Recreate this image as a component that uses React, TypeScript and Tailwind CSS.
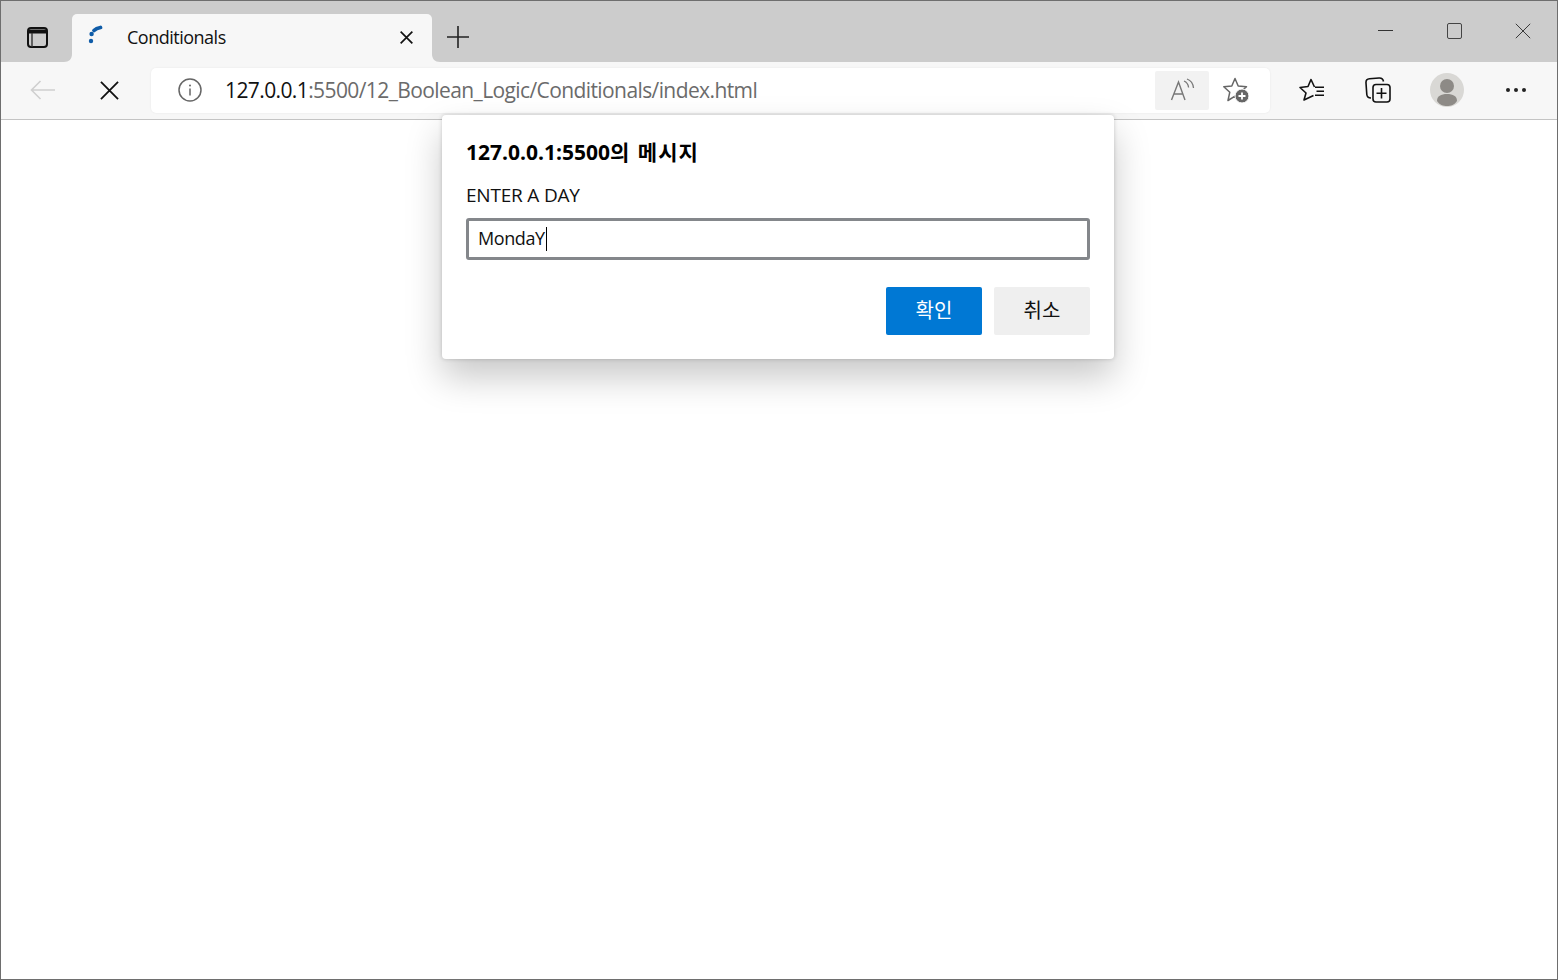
import React from "react";

const FONT = "font-['Noto_Sans','Noto_Sans_CJK_KR',sans-serif]";

function TabFlare({ side }: { side: "l" | "r" }) {
  return (
    <svg width="8" height="8" viewBox="0 0 8 8" className={side === "l" ? "absolute -left-2 bottom-0" : "absolute -right-2 bottom-0"}>
      <path d={side === "l" ? "M8 0V8H0C5 8 8 5 8 0Z" : "M0 0V8H8C3 8 0 5 0 0Z"} fill="#f7f7f7" />
    </svg>
  );
}

function XIcon({ size, sw = 1.6, color = "#111" }: { size: number; sw?: number; color?: string }) {
  return (
    <svg width={size} height={size} viewBox="0 0 20 20" fill="none" stroke={color} strokeWidth={sw}>
      <path d="M1 1L19 19M19 1L1 19" />
    </svg>
  );
}

function TitleBar() {
  return (
    <div className="flex h-[61px] bg-[#cccccc]">
      <div className="flex w-[71px] shrink-0 items-center pl-[26px] pt-[12px]">
        <svg width="21" height="21" viewBox="0 0 21 21" fill="none" stroke="#111" strokeWidth="2">
          <rect x="1" y="1" width="19" height="19" rx="3" />
          <path d="M1 4.5H20" strokeWidth="4" />
          <path d="M5 6V20" strokeWidth="1.4" stroke="#333" />
        </svg>
      </div>
      <div className="relative mt-[13px] flex h-[48px] w-[360px] shrink-0 items-center rounded-t-[5px] bg-[#f7f7f7] pl-[16px] pr-[19px]">
        <TabFlare side="l" />
        <TabFlare side="r" />
        <svg width="16" height="20" viewBox="0 0 16 20" className="shrink-0 -translate-y-[3px]">
          <circle cx="3" cy="16" r="2.2" fill="#0f5ca8" />
          <circle cx="3.6" cy="9" r="2.2" fill="#0f5ca8" />
          <path d="M6 5.5C7.5 4 10 3 12.5 2.5" stroke="#0f5ca8" strokeWidth="3.8" strokeLinecap="round" fill="none" />
        </svg>
        <span className="ml-[23px] flex-1 -translate-y-[1px] text-[18px] leading-none text-[#111] font-['Open_Sans',sans-serif] tracking-[-0.5px]">Conditionals</span>
        <div className="-translate-y-[1px]">
          <XIcon size={13} sw={2.6} />
        </div>
      </div>
      <div className="ml-[15px] flex items-center pt-[11px]">
        <svg width="22" height="22" viewBox="0 0 22 22" stroke="#222" strokeWidth="1.6">
          <path d="M11 0V22M0 11H22" />
        </svg>
      </div>
      <div className="ml-auto flex items-center pb-[2px] pr-[26px]">
        <div className="h-[1px] w-[15px] bg-[#333]" />
        <div className="ml-[54px] h-[16px] w-[15px] rounded-[2px] border-[1.5px] border-[#444]" />
        <div className="ml-[53px]">
          <XIcon size={16} sw={1.2} color="#333" />
        </div>
      </div>
    </div>
  );
}

function AddressBar() {
  return (
    <div className="ml-[20px] flex h-[45px] w-[1119px] shrink-0 items-center rounded-[5px] bg-white pl-[27px] pr-[4px] shadow-[0_0_2px_rgba(0,0,0,0.08)]">
      <svg width="24" height="24" viewBox="0 0 24 24" fill="none" stroke="#666" className="shrink-0">
        <circle cx="12" cy="12" r="11" strokeWidth="1.5" />
        <path d="M12 10.5V17.5" strokeWidth="1.5" />
        <circle cx="12" cy="7.4" r="1" fill="#666" stroke="none" />
      </svg>
      <div className="ml-[23px] flex-1 text-[21px] leading-none tracking-[-0.6px] text-[#6b6b6b] font-['Open_Sans',sans-serif]">
        <span className="text-[#111]">127.0.0.1</span>:5500/12_Boolean_Logic/Conditionals/index.html
      </div>
      <div className="flex h-[39px] w-[54px] items-center justify-center rounded-[2px] bg-[#f2f2f2]">
        <svg width="26" height="24" viewBox="0 0 26 24" fill="none" stroke="#777" strokeWidth="1.4">
          <path d="M2.5 22L9.5 4L16 22M5 16H14" />
          <path d="M15 3C17.5 4 19.2 6 19.6 9.5M18 1C21.5 2.2 24 5 24.5 10" strokeWidth="1.3" />
        </svg>
      </div>
      <div className="relative ml-[14px] mr-[15px] h-[26px] w-[28px]">
        <svg width="28" height="26" viewBox="0 0 28 26" fill="none">
          <path d="M12 1.5L15.2 9L23.5 9.7L17.2 15.2L19 23.5L12 19.2L5 23.5L6.8 15.2L0.8 9.7L8.8 9Z" stroke="#666" strokeWidth="1.5" strokeLinejoin="round" />
          <circle cx="19" cy="19" r="7" fill="#666" stroke="#fff" strokeWidth="1" />
          <path d="M19 15.5V22.5M15.5 19H22.5" stroke="#fff" strokeWidth="1.8" />
        </svg>
      </div>
    </div>
  );
}

function Toolbar() {
  return (
    <div className="flex h-[58px] items-center border-b border-[#c4c4c4] bg-[#f7f7f7] pb-[1px]">
      <div className="ml-[29px] w-[25px] shrink-0">
        <svg width="25" height="20" viewBox="0 0 25 20" fill="none" stroke="#cfcfcf" strokeWidth="1.6">
          <path d="M25 10H1.5M10.5 1L1.5 10L10.5 19" />
        </svg>
      </div>
      <div className="ml-[45px] shrink-0">
        <XIcon size={19} sw={1.9} />
      </div>
      <div className="shrink-0 pl-[12px]">
        <AddressBar />
      </div>
      <div className="ml-[29px] flex items-center">
        <svg width="26" height="24" viewBox="0 0 26 24" fill="none" stroke="#111" strokeWidth="1.6" strokeLinejoin="round">
          <path d="M15.5 9L12 1.5L9 8.5L1 9.5L7 15L5 22L14.5 17.5" />
          <path d="M16 9.2H25M17.5 13.2H25M16 17.2H25" />
        </svg>
        <svg width="26" height="26" viewBox="0 0 26 26" fill="none" stroke="#111" strokeWidth="1.6" className="ml-[40px]">
          <path d="M6 21C3.5 21 2 19.5 1.8 17.5L1 6C0.8 3.5 2.3 2 4.5 1.8L14 1C16.5 0.8 18 2 18.5 4.5" />
          <rect x="8" y="7.5" width="17" height="17.5" rx="3" />
          <path d="M16.5 11V21.5M11.5 16.2H21.5" />
        </svg>
        <svg width="34" height="34" viewBox="0 0 34 34" className="ml-[39px]">
          <circle cx="17" cy="17" r="17" fill="#d9d8d5" />
          <circle cx="17" cy="13" r="7" fill="#8d8a86" />
          <path d="M7 28C7 23 11 21 17 21C23 21 27 23 27 28C24.5 32 21 33 17 33C13 33 9.5 32 7 28Z" fill="#8d8a86" />
        </svg>
        <div className="ml-[42px] flex gap-[4px]">
          <div className="h-[4px] w-[4px] rounded-full bg-[#222]" />
          <div className="h-[4px] w-[4px] rounded-full bg-[#222]" />
          <div className="h-[4px] w-[4px] rounded-full bg-[#222]" />
        </div>
      </div>
    </div>
  );
}

function Dialog() {
  return (
    <div className={`absolute left-[441px] top-[114px] h-[244px] w-[672px] rounded-[4px] bg-white pl-[24px] pr-[24px] pt-[24px] shadow-[0_0_4px_rgba(0,0,0,0.18),0_18px_36px_rgba(0,0,0,0.22)] ${FONT}`}>
      <div className="text-[21px] font-bold leading-[26px] text-black [word-spacing:3px] font-['Open_Sans','Noto_Sans_CJK_KR',sans-serif]">
        127.0.0.1:5500의 <span className="tracking-[1px]">메시지</span>
      </div>
      <div className="mt-[18px] text-[19px] leading-[24px] text-[#111] tracking-[-0.2px] font-['Open_Sans',sans-serif]">ENTER A DAY</div>
      <div className="mt-[11px] flex h-[42px] w-[624px] items-center rounded-[3px] border-[3px] border-[#84878b] pb-[1px] pl-[9px] text-[18px] text-[#111] tracking-[-0.4px] font-['Open_Sans',sans-serif]">
        MondaY<span className="ml-[1px] h-[24px] w-[1px] bg-black" />
      </div>
      <div className="mt-[27px] flex justify-end gap-[12px]">
        <div className="flex h-[48px] w-[96px] items-center justify-center rounded-[2px] bg-[#0078d4] pb-[2px] text-[20px] leading-none text-white font-['Noto_Sans_CJK_KR',sans-serif]">확인</div>
        <div className="flex h-[48px] w-[96px] items-center justify-center rounded-[2px] bg-[#efefef] pb-[2px] text-[20px] leading-none text-[#111] font-['Noto_Sans_CJK_KR',sans-serif]">취소</div>
      </div>
    </div>
  );
}

export default function App() {
  return (
    <div className="relative h-[980px] w-[1558px] overflow-hidden border border-[#6e6e6e] bg-white font-['Open_Sans',sans-serif]">
      <TitleBar />
      <Toolbar />
      <Dialog />
    </div>
  );
}
